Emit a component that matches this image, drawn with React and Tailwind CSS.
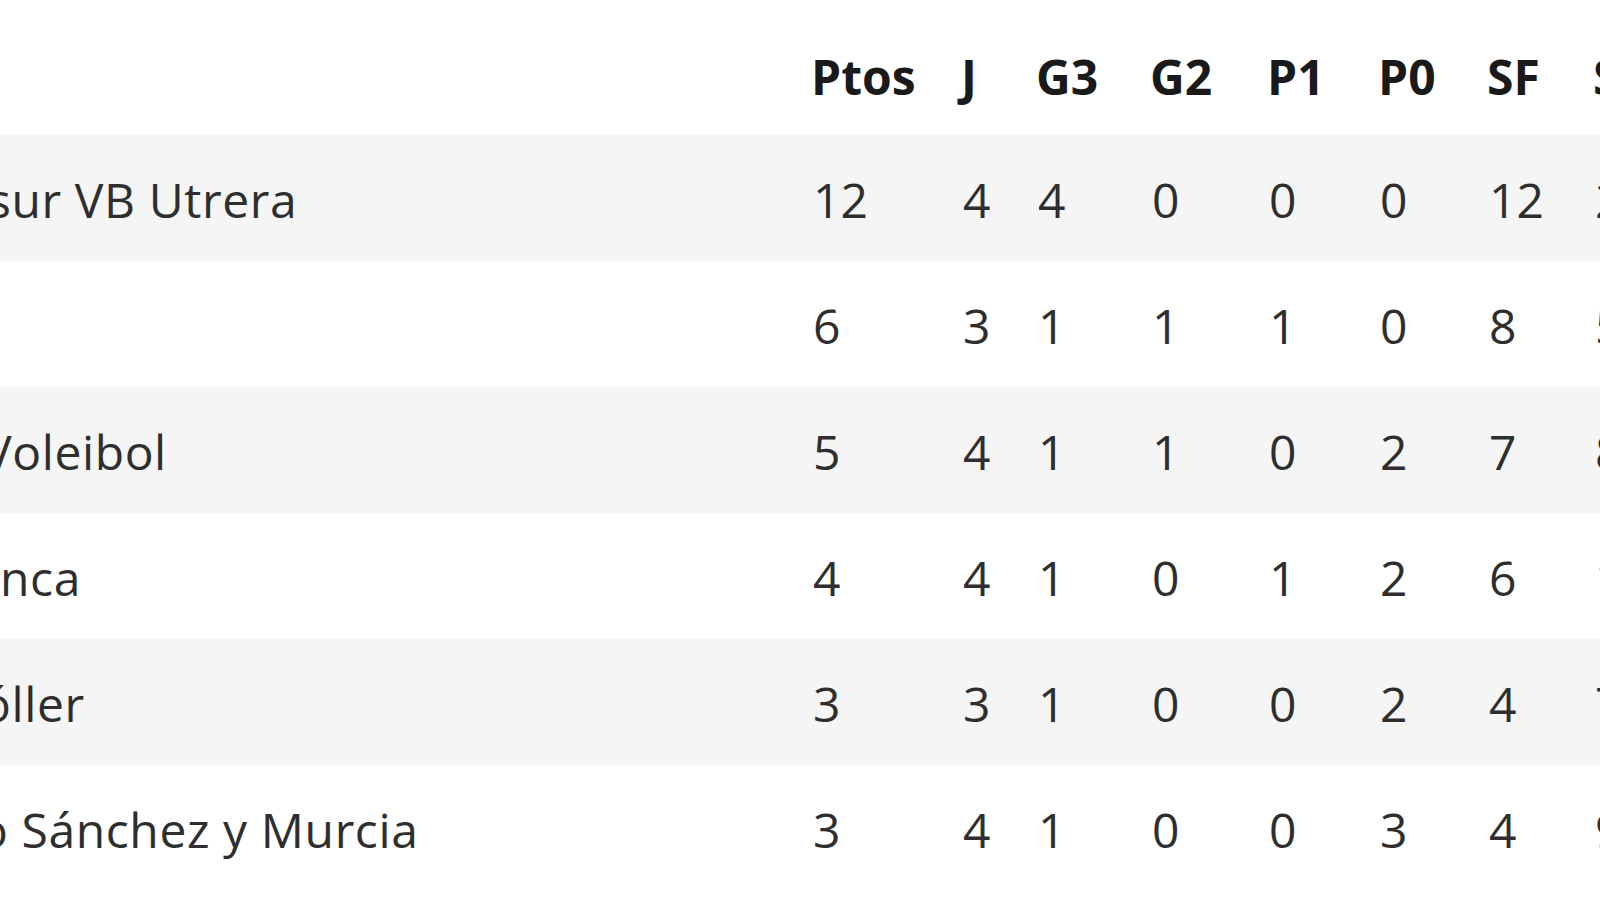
const COLUMNS = ["Ptos", "J", "G3", "G2", "P1", "P0", "SF", "SC"];

// visible end of each team name; the start is cut off by the left edge
const ROWS = [
  { name: "sur VB Utrera", offset: "-ml-[12px]", stats: [12, 4, 4, 0, 0, 0, 12, 2] },
  { name: "", offset: "", stats: [6, 3, 1, 1, 1, 0, 8, 5] },
  { name: "Voleibol", offset: "-ml-[17px]", stats: [5, 4, 1, 1, 0, 2, 7, 8] },
  { name: "nca", offset: "ml-0", stats: [4, 4, 1, 0, 1, 2, 6, 10] },
  { name: "óller", offset: "-ml-[18px]", stats: [3, 3, 1, 0, 0, 2, 4, 7] },
  { name: "o Sánchez y Murcia", offset: "-ml-[21px]", stats: [3, 4, 1, 0, 0, 3, 4, 9] },
];

const GRID =
  "grid grid-cols-[789px_150px_75px_114px_117px_111px_109px_106px_120px]";

function HeaderRow() {
  return (
    <div className={`${GRID} h-[135px]`}>
      <div />
      {COLUMNS.map((col) => (
        <div
          key={col}
          className="flex items-center pl-[22px] pt-[18px] font-bold text-[#1a1a1a] whitespace-nowrap"
        >
          {col}
        </div>
      ))}
    </div>
  );
}

function TeamRow({ row, striped }) {
  return (
    <div className={`${GRID} h-[126px] pt-[4px] ${striped ? "bg-[#f5f5f5]" : "bg-white"}`}>
      <div className="flex items-center whitespace-nowrap tracking-[0.6px]">
        <span className={row.offset}>{row.name}</span>
      </div>
      {row.stats.map((value, i) => (
        <div key={i} className="flex items-center pl-[24px] whitespace-nowrap">
          {value}
        </div>
      ))}
    </div>
  );
}

export default function App() {
  return (
    <div
      className="w-[1600px] h-[900px] overflow-hidden bg-white text-[48px] leading-none text-[#2e2e2e]"
      style={{ fontFamily: '"Open Sans", "Noto Sans", sans-serif' }}
    >
      <HeaderRow />
      {ROWS.map((row, i) => (
        <TeamRow key={i} row={row} striped={i % 2 === 0} />
      ))}
    </div>
  );
}
